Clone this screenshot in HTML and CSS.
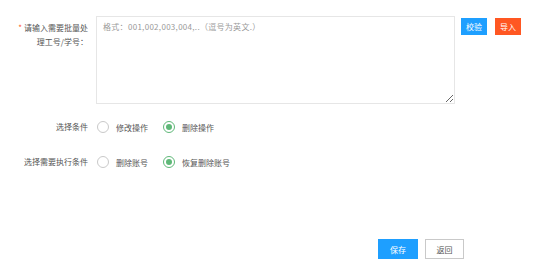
FILE: index.html
```html
<!DOCTYPE html>
<html>
<head>
	<meta charset="utf-8">
	<meta name="viewport" content="width=device-width, initial-scale=1">
	<title>批量处理</title>
	<link rel="stylesheet" href="styles.css">
</head>
<body>
	<form class="form">
		<div class="item">
			<label class="label label-tall"><span class="req">*</span>请输入需要批量处理工号/学号：</label>
			<div class="block">
				<textarea class="textarea" placeholder="格式：001,002,003,004,..（逗号为英文.）"></textarea>
			</div>
			<button type="button" class="btn btn-blue">校验</button>
			<button type="button" class="btn btn-orange">导入</button>
		</div>

		<div class="item item-radio first">
			<label class="label">选择条件</label>
			<div class="radios">
				<span class="radio"><i class="circle"></i>修改操作</span>
				<span class="radio on"><i class="circle"></i>删除操作</span>
			</div>
		</div>

		<div class="item item-radio">
			<label class="label">选择需要执行条件</label>
			<div class="radios">
				<span class="radio"><i class="circle"></i>删除账号</span>
				<span class="radio on"><i class="circle"></i>恢复删除账号</span>
			</div>
		</div>

		<div class="footer">
			<button type="button" class="btn btn-save">保存</button>
			<button type="button" class="btn btn-back">返回</button>
		</div>
	</form>
</body>
</html>
```

FILE: styles.css
```css
body {
	margin: 0;
	font-family: "Noto Sans CJK SC", "Noto Sans", sans-serif;
	font-size: 8px;
	color: #555;
	background: #fff;
}
.form {
	padding-top: 16px;
}
.item {
	display: flex;
	align-items: flex-start;
}
.label {
	width: 80px;
	margin-left: 8px;
	text-align: right;
	line-height: 14px;
}
.label-tall {
	padding-top: 5px;
	padding-left: 6px;
	box-sizing: border-box;
}
.req {
	color: #ff5722;
	margin-right: 2px;
}
.block {
	margin-left: 8px;
}
.textarea {
	display: block;
	width: 359px;
	height: 88px;
	box-sizing: border-box;
	border: 1px solid #e6e6e6;
	padding: 4px 6px;
	font-family: inherit;
	font-size: 8px;
	line-height: 12px;
	letter-spacing: 0.3px;
	color: #555;
	resize: vertical;
	outline: none;
}
.textarea::placeholder {
	color: #999;
}
.btn {
	border: none;
	outline: none;
	font-family: inherit;
	font-size: 8px;
	padding: 0;
	cursor: pointer;
}
.btn-blue, .btn-orange {
	height: 17px;
	width: 26px;
	margin-top: 2px;
	color: #fff;
}
.btn-blue {
	background: #1e9fff;
	margin-left: 6px;
}
.btn-orange {
	background: #ff5722;
	margin-left: 8px;
}
.item-radio {
	align-items: center;
	height: 20px;
	margin-top: 15px;
}
.item-radio.first {
	margin-top: 13px;
}
.radios {
	display: flex;
	margin-left: 9px;
}
.radio {
	display: flex;
	align-items: center;
	margin-right: 15px;
}
.circle {
	width: 12px;
	height: 12px;
	box-sizing: border-box;
	border: 1px solid #c9c9c9;
	border-radius: 50%;
	margin-right: 7px;
	display: flex;
	align-items: center;
	justify-content: center;
}
.radio.on .circle {
	border-color: #5fb878;
}
.radio.on .circle::after {
	content: "";
	width: 6px;
	height: 6px;
	border-radius: 50%;
	background: #5fb878;
}
.footer {
	display: flex;
	margin-top: 67px;
	margin-left: 378px;
}
.btn-save {
	width: 40px;
	height: 20px;
	background: #1e9fff;
	color: #fff;
}
.btn-back {
	width: 39px;
	height: 20px;
	margin-left: 7px;
	background: #fff;
	color: #555;
	border: 1px solid #c9c9c9;
	box-sizing: border-box;
}
```
